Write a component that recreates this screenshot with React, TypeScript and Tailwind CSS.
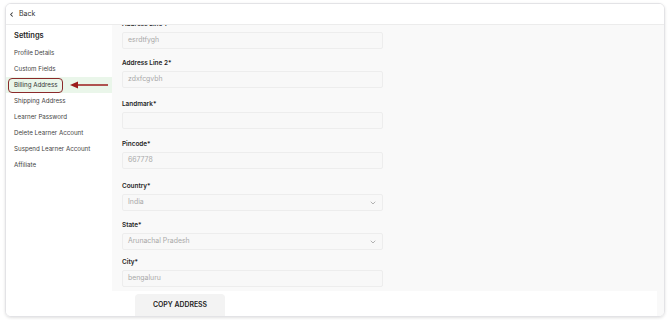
import React from "react";

const menu = [
  "Profile Details",
  "Custom Fields",
  "Billing Address",
  "Shipping Address",
  "Learner Password",
  "Delete Learner Account",
  "Suspend Learner Account",
  "Affiliate",
];

function Chevron() {
  return (
    <svg width="8" height="8" viewBox="0 0 24 24" fill="none" stroke="#a3a3a3" strokeWidth="2.5" strokeLinecap="round" strokeLinejoin="round">
      <path d="M6 9l6 6 6-6" />
    </svg>
  );
}

function Field({ label, value, select, gap }: { label: string; value: string; select?: boolean; gap: string }) {
  return (
    <div className="flex flex-col">
      <div className={gap + " flex items-end pb-[3px] text-[6.4px] leading-[9px] font-semibold text-[#1f1f1f]"}>{label}</div>
      <div className="w-[261px] h-[17px] border border-[#ededed] bg-[#f8f8f8] rounded-[2px] flex items-center justify-between px-[5px] text-[6.9px] text-[#a8a8a8]">
        <span>{value}</span>
        {select && <Chevron />}
      </div>
    </div>
  );
}

export default function App() {
  return (
    <div className="w-[670px] h-[320px] bg-white pt-[3px] pl-[5px]" style={{ fontFamily: "Inter, 'Noto Sans', sans-serif" }}>
      <div className="w-[660px] h-[314px] rounded-[6px] border border-[#e3e3e6] shadow-[0_1px_3px_rgba(0,0,0,0.12)] flex flex-col overflow-hidden">
        {/* Header */}
        <div className="h-[21px] shrink-0 flex items-center gap-[4px] pl-[2px] border-b border-[#ececec] bg-white z-10">
          <svg width="7" height="7" viewBox="0 0 24 24" fill="none" stroke="#333" strokeWidth="3.5" strokeLinecap="round" strokeLinejoin="round">
            <path d="M15 6l-6 6 6 6" />
          </svg>
          <span className="text-[7px] text-[#333]">Back</span>
        </div>

        <div className="flex flex-1 min-h-0">
          {/* Sidebar */}
          <div className="w-[106px] shrink-0 bg-white pt-[2px]">
            <div className="pl-[8px] h-[18px] flex items-center text-[7.5px] font-semibold text-[#1f1f1f]">Settings</div>
            <div className="flex flex-col">
              {menu.map((m) => {
                const active = m === "Billing Address";
                return (
                  <div key={m} className={active ? "h-[16px] flex items-center bg-[#eaf6ea] relative" : "h-[16px] flex items-center"}>
                    {active ? (
                      <>
                        <span className="ml-[2px] px-[5px] h-[15px] flex items-center rounded-[4px] border border-[#8b2a2a] text-[6.2px] text-[#333]">
                          {m}
                        </span>
                        <svg className="absolute left-[63px] top-[3px]" width="40" height="10" viewBox="0 0 40 10">
                          <line x1="8" y1="5" x2="39" y2="5" stroke="#9b1c1c" strokeWidth="1.6" />
                          <path d="M1 5 L9 1.5 L9 8.5 Z" fill="#9b1c1c" />
                        </svg>
                      </>
                    ) : (
                      <span className="pl-[8px] text-[6.2px] text-[#444]">{m}</span>
                    )}
                  </div>
                );
              })}
            </div>
          </div>

          {/* Main */}
          <div className="flex-1 bg-[#f9f9f9] flex flex-col min-h-0 pr-[7px]">
            <div className="flex-1 overflow-hidden pl-[10px]">
              <div className="-mt-[16px] flex flex-col">
                <Field gap="h-[23px]" label="Address Line 1*" value="esrdtfygh" />
                <Field gap="h-[22px]" label="Address Line 2*" value="zdxfcgvbh" />
                <Field gap="h-[24px]" label="Landmark*" value="" />
                <Field gap="h-[23px]" label="Pincode*" value="667778" />
                <Field gap="h-[25px]" label="Country*" value="India" select />
                <Field gap="h-[22px]" label="State*" value="Arunachal Pradesh" select />
                <Field gap="h-[20px]" label="City*" value="bengaluru" />
              </div>
            </div>
            <div className="h-[25px] shrink-0 bg-white flex items-end pl-[23px]">
              <div className="w-[90px] h-[22px] bg-[#f3f3f3] rounded-t-[4px] flex items-center justify-center text-[6.9px] font-semibold text-[#222]">
                COPY ADDRESS
              </div>
            </div>
          </div>
        </div>
      </div>
    </div>
  );
}
